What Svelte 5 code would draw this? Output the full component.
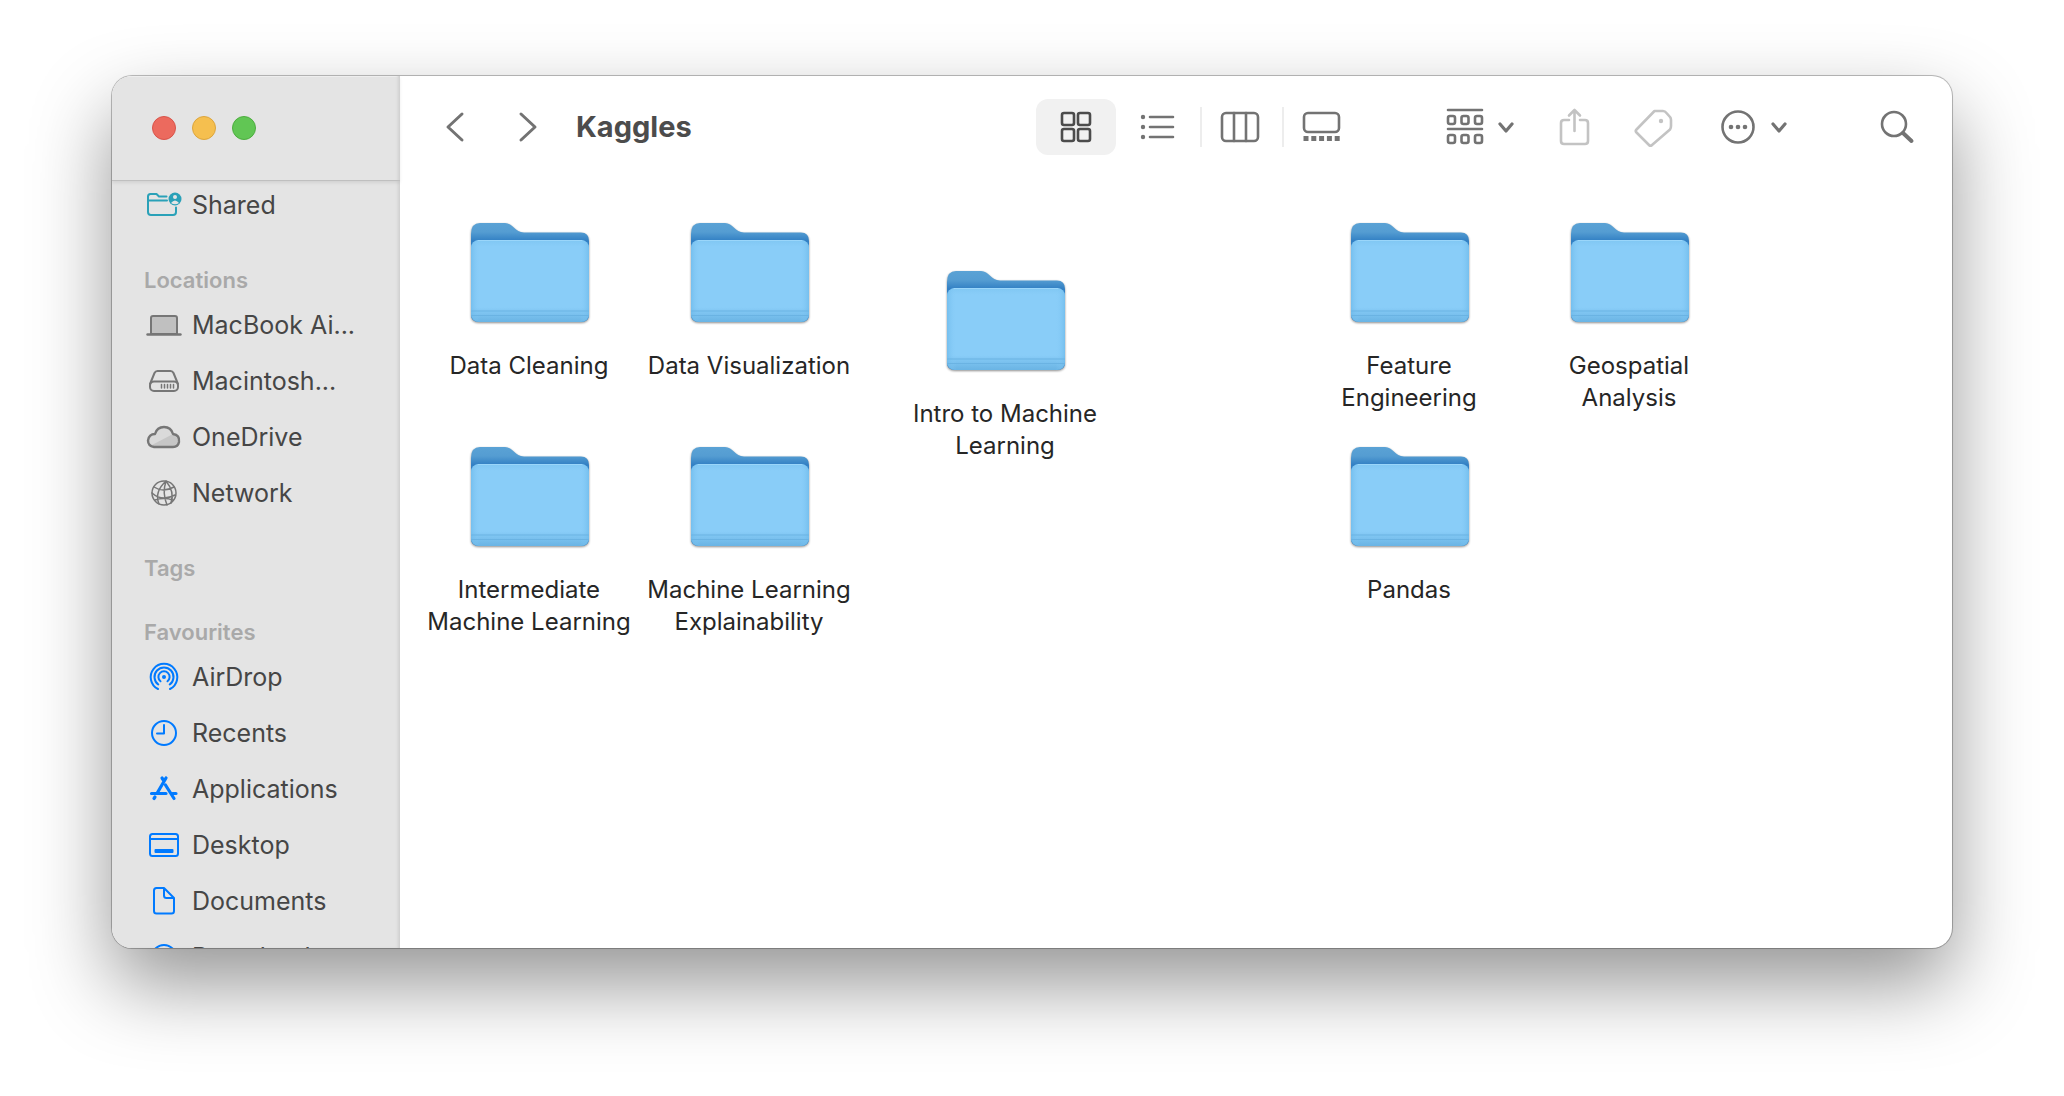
<script>
  const sections = [
    { title: '', items: [{ name: 'Shared', icon: 'shared' }] },
    {
      title: 'Locations',
      items: [
        { name: 'MacBook Ai...', icon: 'laptop' },
        { name: 'Macintosh...', icon: 'disk' },
        { name: 'OneDrive', icon: 'cloud' },
        { name: 'Network', icon: 'globe' }
      ]
    },
    { title: 'Tags', items: [] },
    {
      title: 'Favourites',
      items: [
        { name: 'AirDrop', icon: 'airdrop' },
        { name: 'Recents', icon: 'clock' },
        { name: 'Applications', icon: 'apps' },
        { name: 'Desktop', icon: 'desktop' },
        { name: 'Documents', icon: 'document' },
        { name: 'Downloads', icon: 'download' }
      ]
    }
  ];

  // Folder positions on the free-form icon canvas
  const folders = [
    { name: 'Data Cleaning', x: 25, y: 30 },
    { name: 'Data Visualization', x: 245, y: 30 },
    { name: 'Intro to Machine Learning', x: 501, y: 78 },
    { name: 'Feature Engineering', x: 905, y: 30 },
    { name: 'Geospatial Analysis', x: 1125, y: 30 },
    { name: 'Intermediate Machine Learning', x: 25, y: 254 },
    { name: 'Machine Learning Explainability', x: 245, y: 254 },
    { name: 'Pandas', x: 905, y: 254 }
  ];

  const views = ['grid', 'list', 'columns', 'gallery'];
  let view = $state('grid');
</script>

{#snippet sideIcon(kind)}
  <svg class="side-icon {kind}" viewBox="0 0 36 36" aria-hidden="true">
    {#if kind === 'shared'}
      <path d="M20.5 9.500H13L10.500 7H4.500Q2 7 2 9.500V25Q2 28 5 28H27Q30 28 30 25V20.500M2 13.500H21" />
      <circle class="solid" cx="29" cy="12" r="6.500" />
      <circle class="hole" cx="29" cy="10" r="2" />
      <path class="hole" d="M25 16Q29 11 33 16Q29 18.500 25 16Z" />
    {:else if kind === 'laptop'}
      <path class="tint" d="M5 27V11Q5 9 7 9H29Q31 9 31 11V27Z" />
      <path class="thick" d="M1.500 27.500H34.500" />
    {:else if kind === 'disk'}
      <path d="M4 21L8.500 10Q9.500 8 11.500 8H24.500Q26.500 8 27.500 10L32 21" />
      <rect x="4" y="18.500" width="28" height="9.500" rx="4" />
      <path class="vents" d="M15.500 21.500V25M18.500 21.500V25M21.500 21.500V25M24.500 21.500V25M27.500 21.500V25" />
    {:else if kind === 'cloud'}
      <path class="cloud-fill" d="M8 28Q2 27 2 21.500Q3 15 9 15Q11 8 18 8Q25 8 27 15Q34 16 33 23Q32 28 27 28Z" />
      <path class="cloud-shade" d="M6 26L27 15Q34 16 33 23Q32 28 27 28H8Z" />
      <path class="thick" d="M8 28Q2 27 2 21.500Q3 15 9 15Q11 8 18 8Q25 8 27 15Q34 16 33 23Q32 28 27 28Z" />
    {:else if kind === 'globe'}
      <circle cx="18" cy="18" r="12" />
      <path d="M20 6Q8 17 13 29M20 6Q16 18 21 30M20 6Q29 17 25 28M8 12Q17 18 28 12M6 18Q16 27 29 20M9 25Q18 22 27 25" />
    {:else if kind === 'airdrop'}
      <circle class="solid" cx="18" cy="18" r="2" />
      <path d="M12 30A13.300 13.300 0 1 1 24 30M12.300 25.500A9.500 9.500 0 1 1 23.700 25.500M14.500 22.300A5.600 5.600 0 1 1 21.500 22.300" />
    {:else if kind === 'clock'}
      <circle cx="18" cy="18" r="12" />
      <path d="M18 10V18.500H11" />
    {:else if kind === 'apps'}
      <path class="heavy" d="M16 7L18 10M20 7L11.500 21.500M9 26L8 27.500M5.500 22.500H20M26.500 22.500H30M19.500 14L28 27.500" />
    {:else if kind === 'desktop'}
      <rect x="4" y="7" width="28" height="22" rx="2.500" />
      <path d="M4 12H32" />
      <rect class="solid" x="8.500" y="22" width="19" height="4" rx="1" />
    {:else if kind === 'document'}
      <path d="M18 5H10.500Q8 5 8 7.500V28Q8 30.500 10.500 30.500H25.500Q28 30.500 28 28V15L18 5V12.500Q18 15 20.500 15H28" />
    {:else}
      <circle cx="18" cy="18" r="12" />
      <path d="M18 11V24M13 19L18 24L23 19" />
    {/if}
  </svg>
{/snippet}

{#snippet viewIcon(kind)}
  <svg class="tool-icon" viewBox="0 0 44 40" aria-hidden="true">
    {#if kind === 'grid'}
      <rect x="8" y="6" width="12" height="12" rx="2" />
      <rect x="24" y="6" width="12" height="12" rx="2" />
      <rect x="8" y="22" width="12" height="12" rx="2" />
      <rect x="24" y="22" width="12" height="12" rx="2" />
    {:else if kind === 'list'}
      <path d="M14 10H37M14 20H37M14 30H37" />
      <circle class="solid" cx="7" cy="10" r="2.200" />
      <circle class="solid" cx="7" cy="20" r="2.200" />
      <circle class="solid" cx="7" cy="30" r="2.200" />
    {:else if kind === 'columns'}
      <rect x="4" y="6" width="36" height="28" rx="4" />
      <path d="M16 6V34M28 6V34" />
    {:else}
      <rect x="4" y="6" width="35" height="19" rx="4" />
      <path class="dashes" d="M3.500 31.500H40" />
    {/if}
  </svg>
{/snippet}

{#snippet chevron()}
  <svg class="chevron" viewBox="0 0 16 12" aria-hidden="true"><path d="M2 3L8 10L14 3" /></svg>
{/snippet}

<div class="stage">
  <main class="window">
    <aside class="sidebar">
      <div class="lights">
        <button class="light red" aria-label="Close"></button>
        <button class="light yellow" aria-label="Minimise"></button>
        <button class="light green" aria-label="Zoom"></button>
      </div>
      <nav class="places" aria-label="Places">
        {#each sections as section}
          <section>
            {#if section.title}<h2>{section.title}</h2>{/if}
            {#if section.items.length}
              <ul>
                {#each section.items as item}
                  <li><a href="#{item.icon}">{@render sideIcon(item.icon)}<span>{item.name}</span></a></li>
                {/each}
              </ul>
            {/if}
          </section>
        {/each}
      </nav>
    </aside>

    <div class="content">
      <header class="toolbar">
        <nav class="history" aria-label="History">
          <button class="arrow" aria-label="Back">
            <svg viewBox="0 0 20 32" aria-hidden="true"><path d="M17 3L3 16L17 29" /></svg>
          </button>
          <button class="arrow" aria-label="Forward">
            <svg viewBox="0 0 20 32" aria-hidden="true"><path d="M3 3L17 16L3 29" /></svg>
          </button>
        </nav>
        <h1>Kaggles</h1>
        <div class="views">
          {#each views as kind}
            <button class="view" class:active={view === kind} aria-label="{kind} view" aria-pressed={view === kind} onclick={() => (view = kind)}>
              {@render viewIcon(kind)}
            </button>
          {/each}
        </div>
        <div class="actions">
          <button class="action" aria-label="Group by">
            <svg class="tool-icon" viewBox="0 0 44 40" aria-hidden="true">
              <path d="M5 3H39M5 22H39" />
              <rect x="5" y="9" width="7" height="8" rx="2" /><rect x="18.500" y="9" width="7" height="8" rx="2" /><rect x="32" y="9" width="7" height="8" rx="2" />
              <rect x="5" y="28" width="7" height="8" rx="2" /><rect x="18.500" y="28" width="7" height="8" rx="2" /><rect x="32" y="28" width="7" height="8" rx="2" />
            </svg>
            {@render chevron()}
          </button>
          <button class="action" aria-label="Share" disabled>
            <svg class="tool-icon" viewBox="0 0 44 40" aria-hidden="true">
              <path d="M17 13H12Q9 13 9 16V34Q9 37 12 37H33Q36 37 36 34V16Q36 13 33 13H28M22.500 24V3M17 8.500L22.500 3L28 8.500" />
            </svg>
          </button>
          <button class="action" aria-label="Edit tags" disabled>
            <svg class="tool-icon" viewBox="3 -1 44 40" aria-hidden="true">
              <path d="M23.500 3H32Q34 3 35.500 5L39 9Q40 10 40 12V18Q40 20 39 21.500L21 37Q19.500 38.500 18 37L5.500 24.500Q4 23 5.500 21.500Z" />
              <circle class="solid" cx="30" cy="13" r="2.200" />
            </svg>
          </button>
          <button class="action" aria-label="More actions">
            <svg class="tool-icon" viewBox="0 0 44 40" aria-hidden="true">
              <circle cx="22" cy="20" r="15.500" />
              <circle class="solid" cx="15" cy="20" r="2.300" /><circle class="solid" cx="22" cy="20" r="2.300" /><circle class="solid" cx="29" cy="20" r="2.300" />
            </svg>
            {@render chevron()}
          </button>
        </div>
        <button class="action" aria-label="Search">
          <svg class="tool-icon" viewBox="0 0 44 40" aria-hidden="true">
            <circle cx="19" cy="17" r="12" />
            <path class="handle" d="M28 26L36.500 34" />
          </svg>
        </button>
      </header>

      <div class="canvas">
        {#each folders as folder}
          <a class="folder" href="#folder" style="left: {folder.x}px; top: {folder.y}px">
            <svg viewBox="-1 0 128 128" aria-hidden="true">
              <defs>
                <linearGradient id="back" x1="0" y1="0" x2="0" y2="1">
                  <stop offset="0" stop-color="#5aa2d5" />
                  <stop offset="0.090" stop-color="#559dd2" />
                  <stop offset="0.180" stop-color="#3280c4" />
                  <stop offset="1" stop-color="#3b8acb" />
                </linearGradient>
                <linearGradient id="edge" x1="0" y1="0" x2="1" y2="0">
                  <stop offset="0" stop-color="#6cb9ea" stop-opacity="0.700" />
                  <stop offset="0.080" stop-color="#8acdf8" stop-opacity="0" />
                  <stop offset="0.920" stop-color="#8acdf8" stop-opacity="0" />
                  <stop offset="1" stop-color="#6cb9ea" stop-opacity="0.700" />
                </linearGradient>
                <linearGradient id="front" x1="0" y1="0" x2="0" y2="1">
                  <stop offset="0" stop-color="#80c7f3" />
                  <stop offset="0.080" stop-color="#89cdf8" />
                  <stop offset="0.820" stop-color="#89cdf8" />
                  <stop offset="1" stop-color="#6ab4e4" />
                </linearGradient>
              </defs>
              <path class="back" fill="url(#back)" d="M5 26Q5 15 14 15H39C47 15 49 24.500 58 24.500H115Q123 24.500 123 33V107Q123 114 115 114H13Q5 114 5 107Z" />
              <rect fill="url(#front)" x="5" y="32" width="118" height="82" rx="8" />
              <rect fill="url(#edge)" x="5" y="32" width="118" height="82" rx="8" />
              <path class="line" d="M5.500 103H122.500M5.500 107.500H122.500" />
              <path class="shine" d="M12 32.500H116" />
            </svg>
            <span>{folder.name}</span>
          </a>
        {/each}
      </div>
    </div>
  </main>
</div>

<style>
  :global(body) {
    margin: 0;
    background: #fff;
    font-family: Inter, "Liberation Sans", sans-serif;
  }
  .stage {
    box-sizing: border-box;
    height: 100vh;
    padding: 76px 112px 148px;
    overflow: hidden;
  }
  .window {
    display: flex;
    height: 100%;
    border-radius: 20px;
    overflow: hidden;
    background: #fff;
    box-shadow: 0 0 0 1px rgba(0, 0, 0, 0.22), 0 0 2px rgba(0, 0, 0, 0.15), 0 36px 80px rgba(0, 0, 0, 0.42);
  }
  button {
    padding: 0;
    border: 0;
    background: none;
    font: inherit;
  }
  svg {
    display: block;
    fill: none;
    stroke: currentColor;
    stroke-linecap: round;
    stroke-linejoin: round;
  }
  .solid {
    fill: currentColor;
    stroke: none;
  }

  .sidebar {
    display: flex;
    flex-direction: column;
    flex: 0 0 288px;
    box-sizing: border-box;
    background: #e4e4e4;
    box-shadow: inset -3px 0 3px -1px #cfcfcf, inset 0 2px 1px -1px #f4f4f4;
  }
  .lights {
    display: flex;
    flex: 0 0 104px;
    align-items: center;
    gap: 16px;
    padding-left: 40px;
    border-bottom: 1px solid #bfbfbf;
    box-shadow: 0 2px 3px rgba(0, 0, 0, 0.08);
  }
  .light {
    width: 24px;
    height: 24px;
    border: 1px solid;
    border-radius: 50%;
  }
  .red { background: #ec6a5e; border-color: #d8544a; }
  .yellow { background: #f5bf4f; border-color: #dca53d; }
  .green { background: #61c654; border-color: #4dad3f; }
  .places {
    display: flex;
    flex: 1;
    flex-direction: column;
    gap: 25px;
    min-height: 0;
    overflow: hidden;
    padding: 0 16px 0 32px;
  }
  section {
    flex: none;
  }
  h2 {
    margin: 0 0 5px;
    color: #a9a9a9;
    font-size: 22px;
    font-weight: 600;
    line-height: 32px;
  }
  h2:only-child {
    margin-bottom: 7px;
  }
  ul {
    display: flex;
    flex-direction: column;
    gap: 8px;
    margin: 0;
    padding: 0 0 10px;
    list-style: none;
  }
  li a {
    display: flex;
    align-items: center;
    gap: 10px;
    height: 48px;
    padding-left: 2px;
    color: #464646;
    font-size: 25px;
    text-decoration: none;
    white-space: nowrap;
  }
  .side-icon {
    flex: none;
    width: 36px;
    height: 36px;
    color: #007aff;
    stroke-width: 2;
  }
  .shared { color: #2aa1b8; }
  .laptop, .disk, .cloud, .globe { color: #767676; }
  .globe, .vents { stroke-width: 1.500; }
  .hole { fill: #e4e4e4; stroke: none; }
  .tint { fill: #c0c0c0; }
  .thick { stroke-width: 2.400; }
  .heavy { stroke-width: 3.200; }
  .cloud-fill { fill: #dadada; stroke: none; }
  .cloud-shade { fill: #c6c6c6; stroke: none; }

  .content {
    display: flex;
    flex: 1;
    flex-direction: column;
    min-width: 0;
  }
  .toolbar {
    display: flex;
    flex: 0 0 102px;
    align-items: center;
    gap: 38px;
    padding: 0 33px 0 45px;
    color: #737373;
  }
  .history {
    display: flex;
    gap: 53px;
  }
  .arrow {
    color: inherit;
  }
  .arrow svg {
    width: 20px;
    height: 32px;
    stroke-width: 3;
  }
  h1 {
    flex: 1;
    margin: 0;
    color: #4c4c4c;
    font-size: 29px;
    font-weight: 700;
    line-height: 40px;
  }
  .views {
    display: flex;
    gap: 2px;
    margin-right: 43px;
  }
  .view {
    display: grid;
    place-items: center;
    width: 80px;
    height: 56px;
    border-radius: 12px;
    color: inherit;
  }
  .view.active {
    background: #f1f1f1;
    color: #4c4c4c;
  }
  .view:nth-child(n + 3):not(.active) {
    border-radius: 0;
    background: linear-gradient(#ededed, #ededed) left center / 2px 40px no-repeat;
  }
  .tool-icon {
    width: 44px;
    height: 40px;
    stroke-width: 2.600;
  }
  .dashes {
    stroke-width: 5;
    stroke-linecap: butt;
    stroke-dasharray: 5 2.800;
  }
  .handle { stroke-width: 4; }
  .actions {
    display: flex;
    align-items: center;
    gap: 38px;
    margin-right: 50px;
  }
  .action {
    display: flex;
    align-items: center;
    gap: 11px;
    color: inherit;
  }
  .action:disabled {
    color: #c3c3c3;
  }
  .chevron {
    width: 16px;
    height: 12px;
    stroke-width: 3.200;
  }

  .canvas {
    position: relative;
    flex: 1;
    min-height: 0;
  }
  .folder {
    position: absolute;
    display: flex;
    flex-direction: column;
    align-items: center;
    gap: 14px;
    width: 208px;
    color: #262626;
    font-size: 24px;
    line-height: 32px;
    text-align: center;
    text-decoration: none;
  }
  .folder svg {
    width: 128px;
    height: 128px;
    stroke: none;
  }
  .back {
    filter: drop-shadow(0 1px 1px rgba(0, 0, 0, 0.45));
  }
  .folder .line {
    stroke: #6ab3e3;
    stroke-width: 1;
  }
  .folder .shine {
    stroke: #9ad6fa;
    stroke-width: 1;
  }
</style>
